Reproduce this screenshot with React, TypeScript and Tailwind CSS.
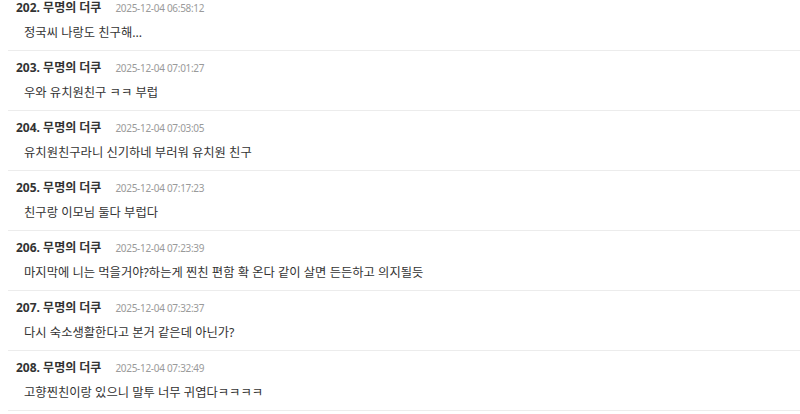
import { FC } from "react";

type Comment = {
  no: number;
  time: string;
  text: string;
};

const comments: Comment[] = [
  { no: 202, time: "2025-12-04 06:58:12", text: "정국씨 나랑도 친구해..." },
  { no: 203, time: "2025-12-04 07:01:27", text: "우와 유치원친구 ㅋㅋ 부럽" },
  { no: 204, time: "2025-12-04 07:03:05", text: "유치원친구라니 신기하네 부러워 유치원 친구" },
  { no: 205, time: "2025-12-04 07:17:23", text: "친구랑 이모님 둘다 부럽다" },
  { no: 206, time: "2025-12-04 07:23:39", text: "마지막에 니는 먹을거야?하는게 찐친 편함 확 온다 같이 살면 든든하고 의지될듯" },
  { no: 207, time: "2025-12-04 07:32:37", text: "다시 숙소생활한다고 본거 같은데 아닌가?" },
  { no: 208, time: "2025-12-04 07:32:49", text: "고향찐친이랑 있으니 말투 너무 귀엽다ㅋㅋㅋㅋ" },
];

const CommentRow: FC<{ c: Comment }> = ({ c }) => {
  return (
    <li className="ml-2 border-b border-[#ececec] px-2 pt-[7px] pb-[7px]">
      <div className="flex items-center h-5">
        <span className="text-[12px] font-bold text-[#333]">{c.no}. 무명의 더쿠</span>
        <span className="ml-3.5 text-[10px] tracking-[-0.3px] text-[#9a9a9a]">{c.time}</span>
      </div>
      <p className="mt-[5px] pl-2 h-5 leading-5 text-[12.3px] text-[#333]">{c.text}</p>
    </li>
  );
};

export default function App() {
  return (
    <div className="w-[800px] h-[414px] overflow-hidden bg-white font-['Noto_Sans','Noto_Sans_CJK_KR',sans-serif]">
      <ul className="-mt-[9px]">
        {comments.map((c) => (
          <CommentRow key={c.no} c={c} />
        ))}
      </ul>
    </div>
  );
}
